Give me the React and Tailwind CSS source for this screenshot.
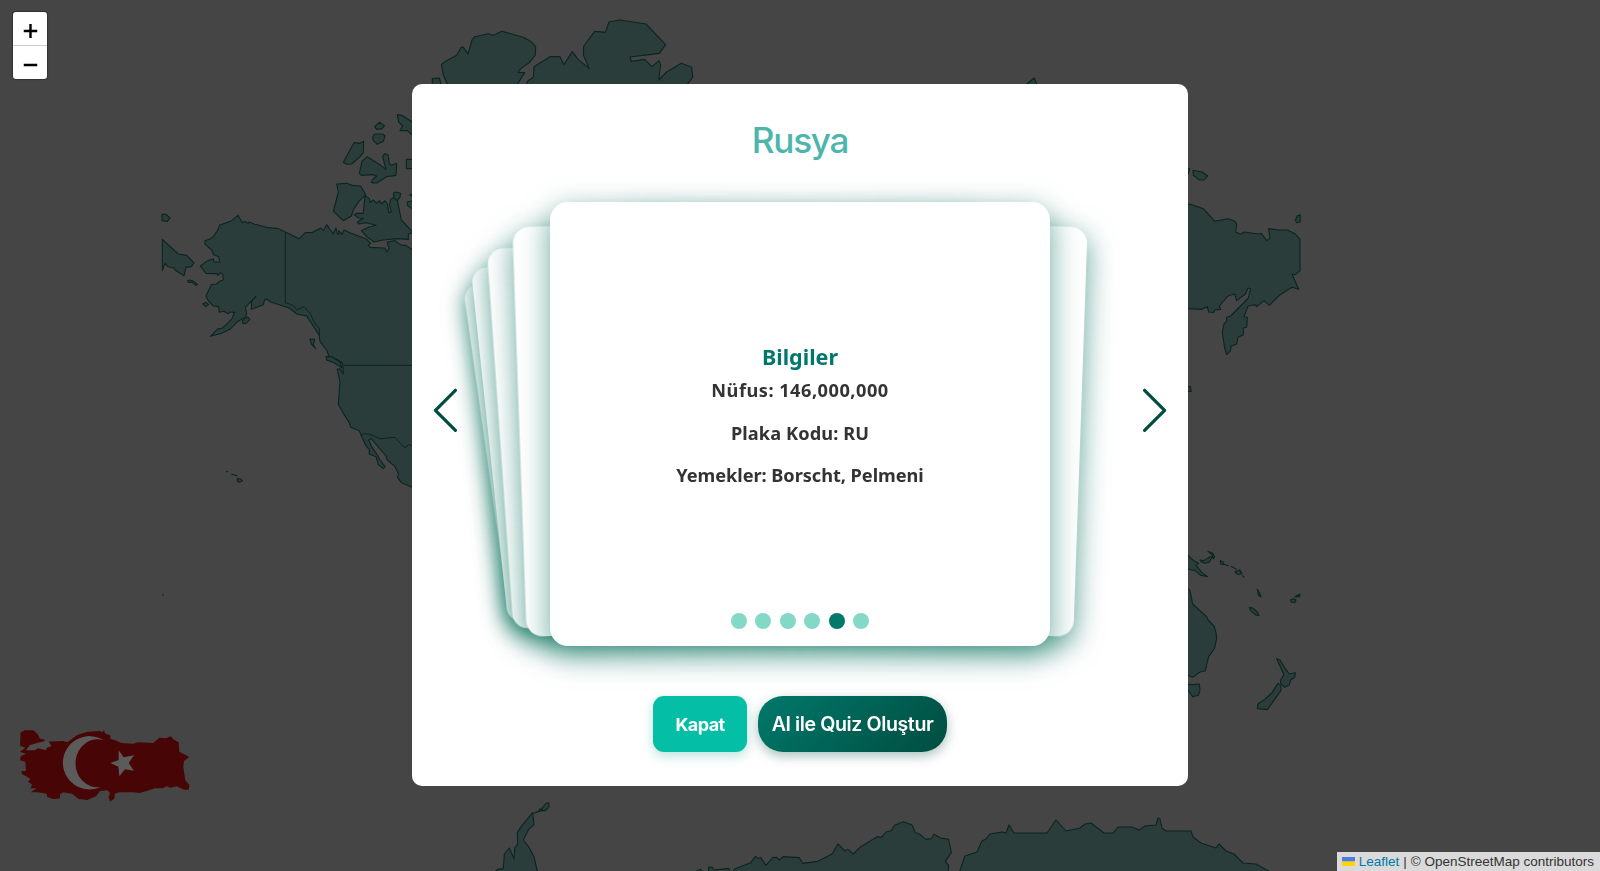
import React from "react";

const NORTH_AMERICA = [
  "M406,96 385,86 350,82 312,72 298,66 294,70 284,64 277,68 264,46 245,62 208,76 205,88 190,110 178,118 165,122 165,132 185,150 191,164 206,170 209,186 192,186 190,176 170,184 151,198 168,220 200,221 204,226 212,218 218,222 220,240 208,244 200,252 184,254 168,288 175,302 190,318 206,320 208,337 222,334 234,341 240,336 254,337 246,356 235,368 215,385 204,386 181,409 215,400 240,388 262,365 285,352 290,342 286,322 317,290 305,304 304,328 340,314 344,299 352,298 362,306 418,324 440,342 470,348 508,406 510,425 530,450 537,470 560,478 578,490 580,522 570,506 562,508 570,545 565,612 580,640 598,668 602,682 628,692 633,705 648,738 658,748 658,762 678,770 685,794 700,806 705,800 690,780 682,765 665,740 656,720 664,715 682,738 708,768 712,780 735,800 746,822 742,832 755,848 786,862 820,870 820,152 788,150 768,136 755,136 735,122 712,126 712,132 718,144 710,156 704,144 660,142 655,136 662,130 650,118 600,98 582,90 577,103 566,92 567,102 562,102 558,84 550,102 530,74 520,92 513,84 485,98 466,98 448,116Z",
  "M528,470 545,470 570,486 576,504 555,490 530,480Z",
  "M640,40 620,40 612,44 626,54 640,55 622,66 626,72 650,68 678,76 655,82 634,92 650,110 672,126 700,120 740,116 775,118 775,102 790,98 754,60 742,0 735,-8 722,-2 718,14 724,36 716,38 712,12 705,2 695,12 688,2 680,10 670,0 660,8 658,-4 645,-14Z",
  "M36,43 48,43 60,54 52,64 36,62Z",
  "M37,118 85,162 110,166 132,189 124,200 108,202 102,227 75,210 73,204 54,200 46,190 42,198 37,212Z",
  "M113,242 118,240 128,242 143,253 138,256 125,246 116,248Z",
  "M158,312 168,307 176,313 168,320Z",
  "M277,362 292,351 300,358 290,369 279,371Z",
  "M480,417 494,418 490,434 497,446 484,432Z",
  "M228,816 234,814 M244,822 250,824 262,827 M262,836 272,837 277,842 268,847 262,843Z",
];

const ARCTIC_ISLES = [
  "M1124,380 1138,367 1154,377 1146,386 1130,388Z",
  "M1118,410 1124,402 1148,402 1155,408 1150,424 1132,433 1120,422Z",
  "M1192,344 1206,346 1245,372 1245,412 1222,392 1200,392 1208,378 1196,366Z",
  "M1030,487 1062,428 1080,430 1091,424 1090,458 1080,470 1055,492 1040,493Z",
  "M1078,520 1086,484 1102,470 1142,496 1158,508 1148,470 1154,461 1164,464 1168,490 1174,496 1190,490 1188,526 1160,530 1130,549 1114,548 1118,538 1130,528 1118,524 1084,526Z",
  "M1010,552 1040,550 1056,556 1082,558 1097,584 1076,605 1060,630 1054,648 1030,662 1000,634 1015,576Z",
  "M1180,580 1188,576 1202,580 1200,592 1192,602 1182,594Z",
  "M1219,478 1245,478 1245,506 1219,506Z M1222,606 1245,600 1245,632 1222,616Z M1230,585 1245,575 1245,595Z",
];

const GREENLAND = [
  "M124,193 140,182 170,166 184,141 190,142 204,162 216,120 224,110 266,101 280,106 306,94 370,112 395,126 407,140 406,165 388,188 362,206 354,217 374,218 350,256 150,270 130,225Z",
  "M97,236 118,234 126,262 97,262Z",
  "M375,260 384,242 400,232 402,200 450,170 480,170 492,194 517,155 534,178 568,206 550,165 551,138 584,94 616,97 627,66 660,60 738,72 797,134 778,160 690,171 694,184 734,178 756,200 777,182 782,195 776,240 800,216 844,190 875,202 878,232 855,262Z",
];

const EAST_ASIA = [
  "M560,72 576,74 610,86 645,124 684,116 704,124 710,132 707,156 722,163 732,156 776,162 784,160 800,182 810,175 806,146 836,150 862,150 886,162 900,178 900,272 886,284 876,282 896,328 876,322 838,346 808,376 792,362 770,380 766,374 744,378 732,410 742,412 740,442 730,444 730,464 714,472 710,492 694,498 690,514 680,524 674,504 667,458 672,432 680,424 680,412 692,408 745,354 752,326 744,324 736,342 710,362 704,342 684,348 668,366 658,378 662,388 645,390 642,397 626,396 622,380 606,388 560,386Z",
  "M901,104 900,126 890,128 886,120 892,108Z",
  "M579,-29 606,-24 623,-12 612,0 598,0 580,-14Z M560,-36 569,-34 565,-18Z M80,-288 103,-306 112,-282Z",
  "M560,622 570,624 573,634 560,636Z",
];

const OCEANIA = [
  "M20,522 36,538 48,546 56,550 48,556 66,578 83,590 62,586 46,572 20,566Z",
  "M60,540 72,542 90,530 96,532 88,546 76,550 64,546Z M84,514 98,520 104,530 100,536 96,524Z",
  "M121,542 129,546 132,554 122,552Z M130,552 146,557 M153,559 170,568 M165,574 180,572 186,580 176,584 168,580Z M186,586 194,592 M178,568 184,576",
  "M232,628 238,638 243,650 236,646Z M208,683 218,684 232,696 237,707 226,704 214,694Z",
  "M332,660 340,656 348,660 344,668 334,666Z M344,650 360,643 358,650Z",
  "M20,622 30,632 38,672 82,712 84,720 102,738 108,758 110,775 104,804 86,830 76,872 60,876 38,892 20,884Z",
  "M20,912 38,914 58,912 60,930 55,946 38,950 28,936 20,926Z",
  "M290,836 300,840 316,866 328,882 346,878 344,892 332,900 328,914 314,922 302,910 302,900 312,884Z",
  "M294,910 302,916 304,930 290,950 262,989 232,986 234,972 254,958 276,938Z",
  "M20,20 32,20 33,34 20,34Z",
];

const ANTARCTICA = [
  "M100,280 112,268 130,266 133,222 148,204 162,236 164,204 173,192 172,158 186,136 218,98 222,134 206,148 190,180 206,200 222,230 236,290Z",
  "M222,100 236,94 240,86 246,92 232,96Z M246,84 258,70 266,68 268,80 256,92 248,92Z",
  "M710,272 722,268 728,275 M746,262 756,261 762,270 806,265 812,280 746,280Z",
  "M810,285 826,266 872,248 886,229 896,236 902,232 918,256 938,233 950,232 958,240 970,230 1018,233 1028,250 1074,244 1116,222 1134,192 1154,212 1164,208 1180,222 1200,202 1252,170 1264,172 1278,156 1294,152 1304,136 1330,125 1356,135 1366,158 1378,162 1398,178 1414,176 1422,163 1442,174 1466,178 1474,218 1456,244 1466,256 1464,285Z",
];

const ANTARCTICA_EAST = [
  "M959,873 965,856 977,852 982,841 986,839 990,834 1002,832 1006,833 1009,825 1014,833 1047,833 1056,820 1066,831 1080,828 1085,824 1091,823 1104,833 1113,833 1118,827 1132,827 1139,830 1145,826 1156,825 1158,818 1160,819 1162,828 1166,831 1191,831 1193,837 1201,843 1216,848 1219,844 1226,851 1234,854 1243,863 1256,864 1272,873Z",
];

function Shapes({ paths, transform, strokeWidth = 3.3 }) {
  return (
    <g transform={transform} strokeWidth={strokeWidth}>
      {paths.map((d) => (
        <path key={d} d={d} />
      ))}
    </g>
  );
}

function WorldMap() {
  return (
    <svg
      className="absolute inset-0 h-full w-full fill-[#2b3d3b] stroke-[#0a2521]"
      viewBox="0 0 1600 871"
      strokeLinejoin="round"
      aria-hidden="true"
    >
      <Shapes paths={NORTH_AMERICA} transform="translate(150 200) scale(.33333)" />
      <g transform="translate(150 200) scale(.33333)" fill="none" strokeWidth="3">
        <path d="M406,96V308L418,312 432,318 440,330 462,320 482,342 492,366 508,386V406" />
        <path d="M580,496H820M633,705 642,701 660,703 690,716 735,712 760,740 768,742 775,734 790,738" />
      </g>
      <Shapes paths={ARCTIC_ISLES} transform="scale(.33333)" />
      <Shapes paths={GREENLAND} transform="translate(400 0) scale(.33333)" />
      <Shapes paths={EAST_ASIA} transform="translate(1000 180) scale(.33333)" />
      <Shapes paths={OCEANIA} transform="translate(1180 380) scale(.33333)" />
      <Shapes paths={ANTARCTICA} transform="translate(460 780) scale(.33333)" />
      <Shapes paths={ANTARCTICA_EAST} strokeWidth={1.1} />
      <path d="M162,595h2" />
    </svg>
  );
}

function TurkeyFlag() {
  return (
    <svg
      className="absolute bottom-[68px] left-[15px] h-[76px] w-[180px]"
      viewBox="45 80 540 228"
      aria-hidden="true"
    >
      <path
        className="fill-[#480505]"
        d="M62,96 75,90 100,90 112,100 120,115 134,118 134,124 190,122 202,126 232,104 262,94 300,92 306,96 312,90 316,100 330,104 332,116 346,120 364,128 400,130 414,126 460,128 478,112 498,114 512,108 522,118 536,126 538,154 552,162 568,170 552,182 550,200 556,240 568,254 566,268 552,268 530,258 510,262 500,258 488,264 464,264 440,272 420,278 400,276 380,276 358,276 344,280 344,294 330,304 326,290 330,278 322,270 300,272 288,288 262,299 236,296 216,280 190,276 180,282 180,294 160,296 142,290 140,280 114,276 92,276 110,264 92,264 96,252 84,244 92,236 76,226 66,222 64,212 78,212 76,184 60,180 62,168 78,160 60,154 76,142 60,136Z"
      />
      <path
        className="fill-[#4c4c4c]"
        d="M78,150 90,134 120,126 144,120 154,138 140,142 138,150 114,144 104,150Z"
      />
      <g className="fill-[#5b5b5b]">
        <path d="M312,120A80,80 0 1 0 302,260A66,72 0 1 1 312,120Z" />
        <path d="M356,150 371,171 402,165 386,188 402,211 375,207 358,228 355,199 331,188 356,179Z" />
      </g>
    </svg>
  );
}

function ZoomControl() {
  return (
    <div className="absolute top-[12px] left-[13px] flex w-[34px] flex-col overflow-hidden rounded-[3px] bg-white text-black shadow-[0_0_1px_1px_rgba(0,0,0,0.3)]">
      <button className="flex h-[34px] items-center justify-center border-b border-[#ccc]" aria-label="Zoom in">
        <svg width="14" height="14" viewBox="0 0 14 14" className="translate-x-[0.5px] translate-y-[2px] stroke-black" strokeWidth="2.4">
          <path d="M0 7H14M7 0V14" />
        </svg>
      </button>
      <button className="flex h-[33px] items-center justify-center" aria-label="Zoom out">
        <svg width="14" height="14" viewBox="0 0 14 14" className="translate-x-[0.5px] translate-y-[2px] stroke-black" strokeWidth="2.6">
          <path d="M0 7H14" />
        </svg>
      </button>
    </div>
  );
}

const ACTIVE = 4;
const SLIDES = [0, 1, 2, 3, 4, 5];

// Stacked-deck placement: each step away from the active card recedes and tilts.
function deckTransform(index) {
  const progress = ACTIVE - index;
  const depth = Math.abs(progress);
  const shift = -Math.sign(progress) * (10 - depth * 0.75) * depth;
  return `translate3d(${shift}%, 0, ${-100 * depth}px) rotateZ(${-2 * progress}deg)`;
}

function Arrow({ flip }) {
  return (
    <button className="flex h-[44px] w-[24px] items-center justify-center" aria-label={flip ? "Sonraki" : "Önceki"}>
      <svg
        width="24"
        height="44"
        viewBox="0 0 24 44"
        fill="none"
        strokeWidth="3.2"
        strokeLinecap="round"
        strokeLinejoin="round"
        className={flip ? "-scale-x-100 stroke-[#004d40]" : "stroke-[#004d40]"}
      >
        <path d="M22.4 2.3 2.4 22.3 22.4 42.3" />
      </svg>
    </button>
  );
}

function Deck() {
  return (
    <div className="relative h-[444px] w-[500px] perspective-[1200px]">
      {SLIDES.map((i) => (
        <div
          key={i}
          className="absolute inset-0 flex origin-bottom flex-col items-center rounded-[18px] bg-white shadow-[0_9px_30px_rgba(0,110,88,0.6)]"
          style={{ transform: deckTransform(i), zIndex: 10 - Math.abs(ACTIVE - i) }}
        >
          {i === ACTIVE && (
            <div className="flex flex-col items-center pt-[142px] font-['Noto_Sans',sans-serif] font-bold whitespace-nowrap text-[#333]">
              <h3 className="text-[21.5px] leading-[26px] text-[#00796b]">Bilgiler</h3>
              <p className="mt-[7px] text-[18.2px] leading-[26px] tracking-[0.5px]">Nüfus: 146,000,000</p>
              <p className="mt-[16.5px] text-[18.2px] leading-[26px] tracking-[0.1px]">Plaka Kodu: RU</p>
              <p className="mt-[16.5px] text-[18.2px] leading-[26px] tracking-[-0.05px]">Yemekler: Borscht, Pelmeni</p>
            </div>
          )}
        </div>
      ))}
      <div className="absolute inset-x-0 bottom-[17px] z-20 flex justify-center gap-[8.4px]">
        {SLIDES.map((i) => (
          <span key={i} className={i === ACTIVE ? "size-4 rounded-full bg-[#00796b]" : "size-4 rounded-full bg-[#84d8c8]"} />
        ))}
      </div>
    </div>
  );
}

export default function App() {
  return (
    <div className="relative h-[871px] w-full overflow-hidden bg-[#454545] font-[Inter,sans-serif]">
      <WorldMap />
      <TurkeyFlag />
      <ZoomControl />
      <div className="absolute right-0 bottom-0 flex h-[19px] items-center bg-[#dadada] pr-[6px] pl-[5px] font-['Liberation_Sans',sans-serif] text-[13.5px] leading-[19px] whitespace-nowrap text-[#333]">
        <svg width="13" height="9" viewBox="0 0 13 9" className="mr-[4px]">
          <path fill="#4C7BE1" d="M0 0h13v4.5H0z" />
          <path fill="#FFD500" d="M0 4.5h13V9H0z" />
        </svg>
        <span className="text-[#0078a8]">Leaflet</span>
        <span className="px-[4px]">|</span>
        <span>© OpenStreetMap contributors</span>
      </div>

      <div className="relative flex h-[870px] items-center justify-center">
        <div className="flex h-[702px] w-[776px] flex-col items-center rounded-[10px] bg-white px-[21px] pt-[31px]">
          <h2 className="h-[87px] text-[35.2px] leading-[50px] font-medium tracking-[-1.3px] text-[#4db6ac]">Rusya</h2>
          <div className="flex w-full items-start justify-between">
            <div className="pt-[186px]"><Arrow /></div>
            <Deck />
            <div className="pt-[186px]"><Arrow flip /></div>
          </div>
          <div className="relative mt-[50px] flex gap-[11px] whitespace-nowrap text-white">
            <button className="h-[56px] w-[94px] rounded-[11px] bg-[#04bfa6] text-[18px] font-bold tracking-[-0.6px] shadow-[0_4px_12px_rgba(0,150,130,0.28)]">
              Kapat
            </button>
            <button className="h-[56px] w-[189px] rounded-[25px] bg-linear-135 from-[#00796b] to-[#004d40] pt-[2px] text-[19.6px] font-semibold tracking-[-0.4px] shadow-[0_4px_12px_rgba(0,77,64,0.35)]">
              AI ile Quiz Oluştur
            </button>
          </div>
        </div>
      </div>
    </div>
  );
}
